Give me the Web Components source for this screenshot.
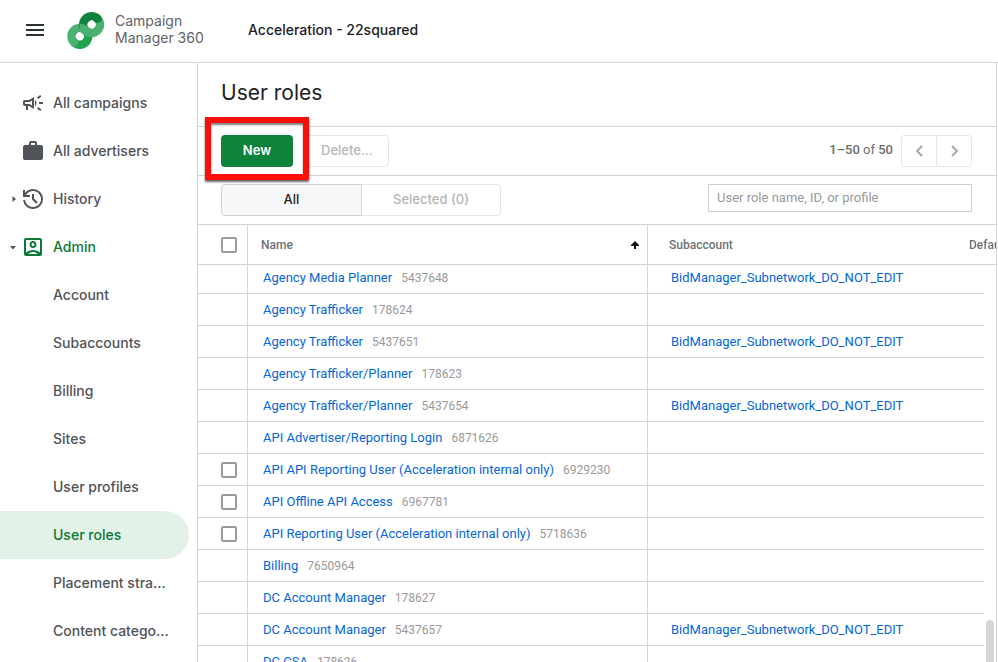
<!DOCTYPE html>
<html lang="en">
<head>
<meta charset="utf-8">
<title>User roles</title>
<style>
	body {
		margin: 0;
		--line: #d2d4d7;
		--soft-line: #e4e5e8;
		--green: #0d823b;
		--ui: Inter, "Open Sans", sans-serif;
		--data: Roboto, "Liberation Sans", sans-serif;
		font: 14px/20px var(--ui);
		color: #202124;
		background: #fff;
	}
	cm-app {
		height: 100vh;
	}
</style>
</head>
<body>
<cm-app>
	<cm-header slot="header" account="Acceleration - 22squared"></cm-header>
	<cm-nav slot="nav">
		<cm-nav-item icon="campaign">All campaigns</cm-nav-item>
		<cm-nav-item icon="work">All advertisers</cm-nav-item>
		<cm-nav-item icon="history" caret="closed">History</cm-nav-item>
		<cm-nav-item icon="account" caret="open" current>Admin</cm-nav-item>
		<cm-nav-item>Account</cm-nav-item>
		<cm-nav-item>Subaccounts</cm-nav-item>
		<cm-nav-item>Billing</cm-nav-item>
		<cm-nav-item>Sites</cm-nav-item>
		<cm-nav-item>User profiles</cm-nav-item>
		<cm-nav-item current selected>User roles</cm-nav-item>
		<cm-nav-item>Placement stra...</cm-nav-item>
		<cm-nav-item>Content catego...</cm-nav-item>
	</cm-nav>
	<cm-toolbar></cm-toolbar>
	<cm-filter></cm-filter>
	<cm-roles></cm-roles>
</cm-app>

<script>
class AppElement extends HTMLElement {
	connectedCallback() {
		let shadow = this.attachShadow({mode: "open"});
		shadow.innerHTML = `
			<style>
				:host {
					display: grid;
					grid-template-rows: min-content minmax(0, 1fr);
					grid-template-columns: 197px minmax(0, 1fr);
					overflow: hidden;
				}
				slot[name=header] {
					display: block;
					grid-column: 1 / 3;
				}
				main {
					display: flex;
					flex-direction: column;
					min-height: 0;
					border: solid var(--line);
					border-width: 0 1px;
					margin-right: 1px;
				}
				h1 {
					margin: 0;
					padding: 14px 23px 17px;
					font: 400 21px/32px var(--ui);
					border-bottom: 1px solid var(--line);
				}
			</style>
			<slot name="header"></slot>
			<slot name="nav"></slot>
			<main>
				<h1>User roles</h1>
				<slot></slot>
			</main>
		`;
	}
}
customElements.define("cm-app", AppElement);

class HeaderElement extends HTMLElement {
	connectedCallback() {
		let shadow = this.attachShadow({mode: "open"});
		shadow.innerHTML = `
			<style>
				:host {
					display: flex;
					align-items: center;
					height: 62px;
					padding-left: 23px;
					border-bottom: 1px solid var(--line);
				}
				button {
					display: flex;
					padding: 0;
					margin: 0 20px 2px 0;
					border: 0;
					background: none;
					cursor: pointer;
				}
				.logo {
					width: 38px;
					height: 38px;
					margin-right: 10px;
					fill: none;
					stroke-width: 8.5;
				}
				.brand {
					width: 133px;
					padding-bottom: 4px;
					line-height: 17px;
					color: #5f6368;
				}
				.account {
					padding-bottom: 2px;
					font-weight: 500;
				}
			</style>
			<button aria-label="Menu">
				<svg width="24" height="24" viewBox="0 0 24 24"><path fill="#2b3236" d="M3 18h18v-2H3v2zm0-5h18v-2H3v2zm0-7v2h18V6H3z"/></svg>
			</button>
			<svg class="logo" viewBox="0 0 38 38">
				<path d="M7 30.300A8.3 8.3 0 0 0 18.700 18.500" stroke="#22a150"/>
				<path d="M30.500 6.700A8.3 8.3 0 0 1 18.700 18.500A8.3 8.3 0 0 0 7 30.300" stroke="#4bb071" stroke-linecap="round"/>
				<path d="M18.700 18.500A8.3 8.3 0 0 1 30.500 6.700" stroke="#0d833c" stroke-linecap="round"/>
				<path d="M24.600 20.900A8.3 8.3 0 0 1 18.700 18.500A8.3 8.3 0 0 0 12.800 16.100" stroke="#4bb071"/>
			</svg>
			<div class="brand">Campaign<br>Manager 360</div>
			<div class="account">${this.getAttribute("account")}</div>
		`;
	}
}
customElements.define("cm-header", HeaderElement);

class NavElement extends HTMLElement {
	connectedCallback() {
		let shadow = this.attachShadow({mode: "open"});
		shadow.innerHTML = `
			<style>
				:host {
					display: block;
					padding: 16px 8px 0 0;
					overflow: hidden;
				}
			</style>
			<nav><slot></slot></nav>
		`;
	}
}
customElements.define("cm-nav", NavElement);

const NAV_ICONS = {
	campaign: "M18 11v2h4v-2h-4zM16 17.610c.96.71 2.210 1.650 3.200 2.390.4-.53.8-1.070 1.200-1.600-.99-.74-2.240-1.680-3.200-2.400-.4.540-.8 1.080-1.200 1.610zM20.400 5.600c-.4-.53-.8-1.070-1.200-1.600-.99.74-2.240 1.680-3.200 2.400.4.530.8 1.070 1.200 1.600.96-.72 2.210-1.650 3.200-2.400zM4 9c-1.100 0-2 .9-2 2v2c0 1.100.9 2 2 2h1v4h2v-4h1l5 3V6L8 9H4zm5.030 1.710L11 9.530v4.940l-1.970-1.180-.48-.29H4v-2h4.550l.48-.29zM15.500 12c0-1.330-.58-2.530-1.500-3.350v6.690c.92-.81 1.500-2.010 1.500-3.340z",
	work: "M20 6h-4V4c0-1.100-.9-2-2-2h-4c-1.100 0-2 .9-2 2v2H4c-1.100 0-2 .9-2 2v11c0 1.100.9 2 2 2h16c1.100 0 2-.9 2-2V8c0-1.100-.9-2-2-2zm-6 0h-4V4h4v2z",
	history: "M12 2C8.730 2 5.820 3.580 4 6.010V3H2v7h7V8H5.100A8 8 0 1 1 4.070 13H2.050A10 10 0 1 0 12 2zM11 7v5.400l4.300 4.300 1.400-1.400L13 11.600V7z",
	account: "M19 3H5c-1.100 0-2 .9-2 2v14c0 1.100.9 2 2 2h14c1.100 0 2-.9 2-2V5c0-1.100-.9-2-2-2zm0 2v12.600C17.300 16 14.700 15 12 15s-5.300 1-7 2.600V5h14zM7.200 19c1.300-1.300 3-2 4.800-2s3.500.7 4.800 2zM12 13c1.930 0 3.500-1.570 3.500-3.500S13.930 6 12 6 8.500 7.570 8.500 9.500 10.070 13 12 13zm0-5c.83 0 1.500.67 1.500 1.500S12.830 11 12 11s-1.500-.67-1.500-1.500S11.170 8 12 8z"
};

const CARETS = {
	closed: "M3.500 3L7 6L3.500 9Z",
	open: "M1 5L7 5L4 8.500Z"
};

class NavItemElement extends HTMLElement {
	connectedCallback() {
		let shadow = this.attachShadow({mode: "open"});
		let icon = NAV_ICONS[this.getAttribute("icon")];
		let caret = CARETS[this.getAttribute("caret")];
		shadow.innerHTML = `
			<style>
				:host {
					display: block;
					color: #505358;
				}
				:host([current]) {
					color: #0b7a38;
				}
				:host([selected]) {
					background: #e2f2e7;
					border-radius: 0 24px 24px 0;
				}
				a {
					display: grid;
					grid-template-columns: 12px 24px 1fr;
					align-items: center;
					height: 48px;
					padding-left: 9px;
					color: inherit;
					font-weight: 500;
					text-decoration: none;
				}
				svg {
					display: block;
					fill: currentColor;
				}
				.caret {
					fill: #54575c;
				}
				.label {
					grid-column: 3;
					padding-left: 8px;
					white-space: nowrap;
				}
			</style>
			<a href="#">
				${caret ? `<svg class="caret" width="12" height="12" viewBox="0 0 12 12"><path d="${caret}"/></svg>` : "<span></span>"}
				${icon ? `<svg width="24" height="24" viewBox="0 0 24 24"><path d="${icon}"/></svg>` : ""}
				<span class="label"><slot></slot></span>
			</a>
		`;
	}
}
customElements.define("cm-nav-item", NavItemElement);

class ToolbarElement extends HTMLElement {
	connectedCallback() {
		let shadow = this.attachShadow({mode: "open"});
		shadow.innerHTML = `
			<style>
				:host {
					display: flex;
					align-items: center;
					height: 48px;
					padding: 0 24px 0 23px;
					border-bottom: 1px solid var(--line);
				}
				button {
					box-sizing: border-box;
					height: 32px;
					padding: 0 15px 2px;
					border: 1px solid var(--soft-line);
					border-radius: 4px;
					background: #fff;
					color: #b4b5b8;
					font: 500 13px/20px var(--ui);
				}
				.new {
					width: 72px;
					border: 0;
					background: var(--green);
					color: #fff;
					font-weight: 600;
				}
				.highlight {
					position: relative;
					z-index: 1;
					display: flex;
					margin-right: 12px;
				}
				.highlight::after {
					content: "";
					position: absolute;
					inset: -18px -16px -13px;
					border: 6px solid #fe0d0a;
					box-shadow: 0 2px 2px rgba(0, 0, 0, 0.6), inset 0 2px 2px rgba(0, 0, 0, 0.5);
					pointer-events: none;
				}
				/* white gap between the frame and the button */
				.highlight::before {
					content: "";
					position: absolute;
					inset: -12px -10px -7px;
					background: #fff;
				}
				.highlight button {
					position: relative;
					z-index: 1;
				}
				.count {
					margin: 0 8px 0 auto;
					padding-bottom: 2px;
					font: 500 13px/20px var(--data);
					color: #6b6d70;
				}
				.count span {
					font-weight: 400;
				}
				.pager {
					display: flex;
				}
				.pager button {
					display: flex;
					align-items: center;
					justify-content: center;
					width: 36px;
					padding: 0;
				}
				.pager button:first-child {
					border-right: 0;
					border-radius: 4px 0 0 4px;
					width: 35px;
				}
				.pager button:last-child {
					border-radius: 0 4px 4px 0;
				}
				.pager path {
					fill: none;
					stroke: #a6a8ab;
					stroke-width: 2;
				}
			</style>
			<div class="highlight"><button class="new">New</button></div>
			<button disabled>Delete...</button>
			<div class="count">1–50 <span>of</span> 50</div>
			<div class="pager">
				<button disabled aria-label="Previous page"><svg width="12" height="12" viewBox="0 0 12 12"><path d="M9 1L4 6L9 11"/></svg></button>
				<button disabled aria-label="Next page"><svg width="12" height="12" viewBox="0 0 12 12"><path d="M4 1L9 6L4 11"/></svg></button>
			</div>
		`;
	}
}
customElements.define("cm-toolbar", ToolbarElement);

class FilterElement extends HTMLElement {
	connectedCallback() {
		let shadow = this.attachShadow({mode: "open"});
		shadow.innerHTML = `
			<style>
				:host {
					display: flex;
					align-items: center;
					justify-content: space-between;
					height: 48px;
					padding: 0 24px 0 23px;
					border-bottom: 1px solid var(--line);
				}
				.tabs {
					display: flex;
				}
				.tabs button {
					box-sizing: border-box;
					width: 139px;
					height: 32px;
					padding: 0 0 2px;
					border: 1px solid var(--soft-line);
					border-left: 0;
					border-radius: 0 4px 4px 0;
					background: #fff;
					color: #b4b5b8;
					font: 500 13px/20px var(--ui);
				}
				.tabs .on {
					width: 141px;
					border: 1px solid var(--line);
					border-radius: 4px 0 0 4px;
					background: #f7f8fa;
					color: #202124;
				}
				input {
					box-sizing: border-box;
					width: 264px;
					height: 28px;
					margin: 0 0 4px;
					padding: 0 8px 2px;
					border: 1px solid #cbcdd2;
					border-radius: 0;
					font: 13px/20px var(--data);
				}
				input::placeholder {
					color: #97999c;
				}
			</style>
			<div class="tabs">
				<button class="on">All</button>
				<button disabled>Selected (0)</button>
			</div>
			<input type="text" aria-label="Search user roles" placeholder="User role name, ID, or profile">
		`;
	}
}
customElements.define("cm-filter", FilterElement);

const SUBACCOUNT = "BidManager_Subnetwork_DO_NOT_EDIT";
const ROLES = [
	{name: "Agency Media Planner", id: 5437648, sub: SUBACCOUNT},
	{name: "Agency Trafficker", id: 178624},
	{name: "Agency Trafficker", id: 5437651, sub: SUBACCOUNT},
	{name: "Agency Trafficker/Planner", id: 178623},
	{name: "Agency Trafficker/Planner", id: 5437654, sub: SUBACCOUNT},
	{name: "API Advertiser/Reporting Login", id: 6871626},
	{name: "API API Reporting User (Acceleration internal only)", id: 6929230, editable: true},
	{name: "API Offline API Access", id: 6967781, editable: true},
	{name: "API Reporting User (Acceleration internal only)", id: 5718636, editable: true},
	{name: "Billing", id: 7650964},
	{name: "DC Account Manager", id: 178627},
	{name: "DC Account Manager", id: 5437657, sub: SUBACCOUNT},
	{name: "DC CSA", id: 178626}
];

class RolesElement extends HTMLElement {
	connectedCallback() {
		let shadow = this.attachShadow({mode: "open"});
		let rows = "";
		for (let r of ROLES) {
			rows += `
				<tr>
					<td class="check">${r.editable ? `<input type="checkbox" aria-label="${r.name}">` : ""}</td>
					<td class="name"><a href="#">${r.name}</a><span class="id">${r.id}</span></td>
					<td class="sub">${r.sub ? `<a href="#">${r.sub}</a>` : ""}</td>
					<td></td>
					<td class="gutter"></td>
				</tr>`;
		}
		shadow.innerHTML = `
			<style>
				:host {
					display: block;
					flex: 1;
					min-height: 0;
					position: relative;
					font: 13px/20px var(--data);
				}
				#scroller {
					height: 100%;
					overflow: hidden auto;
					scrollbar-width: none;
				}
				table {
					width: 100%;
					table-layout: fixed;
					border-collapse: separate;
					border-spacing: 0;
				}
				col.check { width: 50px; }
				col.name { width: 400px; }
				col.default { width: 15px; }
				col.gutter { width: 12px; }
				th {
					position: sticky;
					top: 0;
					z-index: 1;
					box-sizing: border-box;
					height: 40px;
					padding: 0;
					border-bottom: 1px solid var(--line);
					background: #fff;
					color: #6f7174;
					font-size: 12px;
					font-weight: 500;
					text-align: left;
					white-space: nowrap;
				}
				td {
					box-sizing: border-box;
					height: 32px;
					padding: 0;
					border-bottom: 1px solid var(--line);
					white-space: nowrap;
				}
				td.gutter {
					border-bottom: 0;
				}
				.check, .name {
					border-right: 1px solid var(--line);
				}
				.check {
					padding-left: 23px;
				}
				th.name { padding: 0 8px 0 13px; }
				td.name { padding-left: 15px; }
				th.sub { padding-left: 21px; }
				td.sub { padding-left: 23px; }
				.sort {
					display: flex;
					align-items: center;
					justify-content: space-between;
				}
				input {
					display: block;
					appearance: none;
					box-sizing: border-box;
					width: 16px;
					height: 16px;
					margin: 0;
					border: 2px solid #9b9b9c;
					border-radius: 2px;
				}
				a {
					color: #0666da;
					font-weight: 400;
					text-decoration: none;
				}
				.id {
					margin-left: 9px;
					font-size: 12px;
					color: #9a9a9a;
				}
				#thumb {
					position: absolute;
					right: 2px;
					bottom: 0;
					width: 8px;
					height: 42px;
					border-radius: 4px 4px 0 0;
					background: #d5d6da;
				}
			</style>
			<div id="scroller">
				<table>
					<colgroup><col class="check"><col class="name"><col><col class="default"><col class="gutter"></colgroup>
					<thead>
						<tr>
							<th class="check"><input type="checkbox" aria-label="Select all"></th>
							<th class="name"><div class="sort">Name<svg width="8" height="8" viewBox="0 0 8 8"><path d="M4 0L8 4V5H5V8H3V5H0V4Z" fill="#111"/></svg></div></th>
							<th class="sub">Subaccount</th>
							<th colspan="2">Default</th>
						</tr>
					</thead>
					<tbody>${rows}</tbody>
				</table>
			</div>
			<div id="thumb"></div>
		`;
		shadow.querySelector("#scroller").scrollTop = 3;
	}
}
customElements.define("cm-roles", RolesElement);
</script>
</body>
</html>
